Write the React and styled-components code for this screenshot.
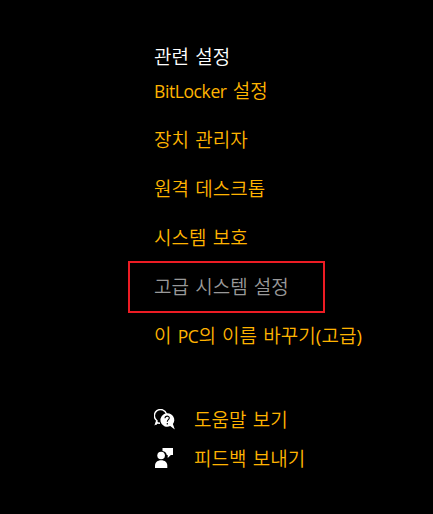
import React from "react";
import styled, { createGlobalStyle } from "styled-components";

const GlobalStyle = createGlobalStyle`
  body {
    margin: 0;
    background: #000;
  }
`;

const Page = styled.main`
  box-sizing: border-box;
  width: 433px;
  height: 514px;
  padding: 43px 0 0 154px;
  overflow: hidden;
  background: #000;
  font-family: "Noto Sans CJK KR DemiLight", "Noto Sans CJK KR", sans-serif;
  font-size: 19px;
  font-weight: 350;
  line-height: 26px;
  word-spacing: 1.8px;
  letter-spacing: 0.05px;
  white-space: nowrap;
`;

const Heading = styled.h2`
  margin: 0 0 8px;
  font: inherit;
  color: #fff;
`;

const LinkList = styled.nav`
  display: flex;
  flex-direction: column;
  align-items: flex-start;
  gap: 23px;
`;

const Link = styled.a`
  height: 26px;
  color: ${(p) => (p.$muted ? "#999" : "#ffb400")};
  cursor: pointer;
`;

const Latin = styled.span`
  font-family: "Open Sans", sans-serif;
  font-size: 17.5px;
  font-weight: 400;
  line-height: 0;
  letter-spacing: -0.4px;
`;

const Paren = styled(Latin)`
  font-size: 18.5px;
  letter-spacing: 0.3px;
`;

const Highlight = styled.div`
  box-sizing: border-box;
  width: 197px;
  height: 52px;
  margin: -12px 0 -14px -26px;
  padding: 10px 0 0 24px;
  border: 2px solid #ed1c24;
`;

const Support = styled.div`
  display: flex;
  flex-direction: column;
  gap: 13px;
  margin-top: 58px;
`;

const SupportRow = styled.div`
  display: grid;
  grid-template-columns: 40px auto;
  align-items: end;
`;

const Icon = styled.svg`
  display: block;
  width: 22px;
  height: 22px;
  margin-bottom: ${(p) => (p.$raised ? "2px" : "1px")};
`;

const HelpIcon = () => (
  <Icon viewBox="0 0 22 22">
    <path d="M2.2 15.5 3 11.8A6.2 6.2 0 1 1 12.5 5" fill="none" stroke="#fff" strokeWidth="1.4" />
    <path d="M.4 16.6 2.1 11.6 4 13.2 6 13.6V15L3.4 14.8Z" fill="#fff" />
    <path d="M13 4.2a6.8 6.8 0 1 0 3.2 12.9L20.8 20.4 18.9 15A6.8 6.8 0 0 0 13 4.2Z" fill="#fff" />
    <path d="M11 9.2c.1-2.8 4.3-2.7 4.3-.2 0 1.7-2 1.8-2 3.8M13.3 14v1.4" fill="none" stroke="#000" strokeWidth="1.1" />
  </Icon>
);

const FeedbackIcon = () => (
  <Icon $raised viewBox="0 0 22 22">
    <path d="M8.5 1H19v7h-2.1l-3.2 3V8h-.9A5 5 0 0 0 8.5 4Z" fill="#fff" />
    <circle cx="7.1" cy="8.5" r="3.8" fill="#fff" />
    <path d="M1 21v-2.2c0-3.5 2.5-5.6 6.2-5.6s6.1 2.1 6.1 5.6V21Z" fill="#fff" />
  </Icon>
);

export default function App() {
  return (
    <>
      <GlobalStyle />
      <Page>
        <Heading>관련 설정</Heading>
        <LinkList>
          <Link><Latin>BitLocker</Latin> 설정</Link>
          <Link>장치 관리자</Link>
          <Link>원격 데스크톱</Link>
          <Link>시스템 보호</Link>
          <Highlight><Link $muted>고급 시스템 설정</Link></Highlight>
          <Link>이 <Latin>PC</Latin>의 이름 바꾸기<Paren>(</Paren>고급<Paren>)</Paren></Link>
        </LinkList>
        <Support>
          <SupportRow><HelpIcon /><Link>도움말 보기</Link></SupportRow>
          <SupportRow><FeedbackIcon /><Link>피드백 보내기</Link></SupportRow>
        </Support>
      </Page>
    </>
  );
}
